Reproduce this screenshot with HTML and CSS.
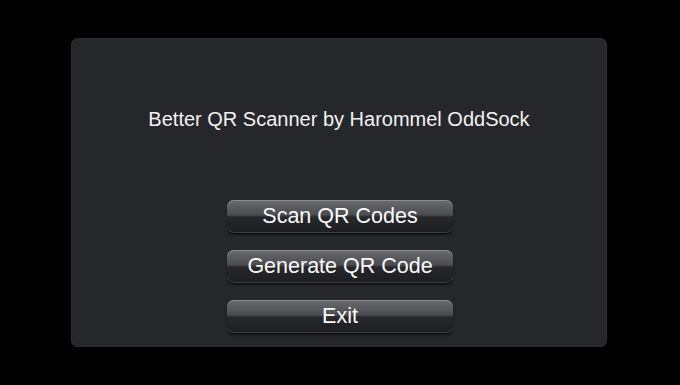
FILE: index.html
```html
<!DOCTYPE html>
<html lang="en">
<head>
  <meta charset="UTF-8">
  <title>Better QR Scanner</title>
  <link rel="stylesheet" href="styles.css">
</head>
<body>

  <div class="painel">
    <h1 class="titulo">Better QR Scanner by Harommel OddSock</h1>

    <div class="menu">
      <button class="botao">Scan QR Codes</button>
      <button class="botao">Generate QR Code</button>
      <button class="botao">Exit</button>
    </div>
  </div>

</body>
</html>
```

FILE: styles.css
```css
html, body {
  margin: 0;
  background-color: #000;
  font-family: "Liberation Sans", Arial, sans-serif;
}

body {
  padding: 38px 0 0 71px;
}

.painel {
  width: 536px;
  height: 309px;
  box-sizing: border-box;
  background-color: #25272b;
  border-radius: 7px;
  box-shadow: inset 0 0 0 1px #2c2e33;
  padding-top: 69px;
}

.titulo {
  margin: 0;
  text-align: center;
  color: #f2f2f2;
  font-weight: normal;
  font-size: 20px;
  line-height: 24px;
}

.menu {
  display: flex;
  flex-direction: column;
  align-items: center;
  gap: 17px;
  margin-top: 69px;
  padding-left: 2px;
}

.botao {
  width: 226px;
  height: 33px;
  padding: 0;
  border: none;
  border-radius: 7px;
  color: #fafafa;
  font-family: "Liberation Sans", Arial, sans-serif;
  font-size: 21.5px;
  line-height: 33px;
  background: linear-gradient(to bottom, #6a6b6e 0%, #4b4c50 45%, #26272a 52%, #1d1e21 100%);
  box-shadow: inset 0 1px 0 #8a8b8e, inset 0 -1px 0 #3a3b3e, 0 2px 2px rgba(0, 0, 0, 0.6);
  cursor: pointer;
}
```
